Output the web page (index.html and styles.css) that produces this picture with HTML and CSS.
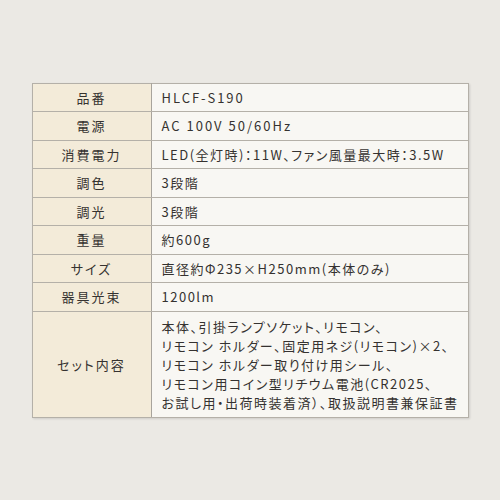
FILE: index.html
```html
<!DOCTYPE html>
<html lang="ja">
<head>
<meta charset="utf-8">
<link rel="stylesheet" href="styles.css">
</head>
<body>
<div class="page">
  <table class="spec">
    <tr><th>品番</th><td class="latin">HLCF-S190</td></tr>
    <tr><th>電源</th><td class="latin">AC 100V 50/60Hz</td></tr>
    <tr><th>消費電力</th><td>LED(全灯時)：11W、ファン風量最大時：3.5W</td></tr>
    <tr><th>調色</th><td>3段階</td></tr>
    <tr><th>調光</th><td>3段階</td></tr>
    <tr><th>重量</th><td>約600g</td></tr>
    <tr><th>サイズ</th><td>直径約Φ235×H250mm(本体のみ)</td></tr>
    <tr><th>器具光束</th><td>1200lm</td></tr>
    <tr class="multi"><th>セット内容</th><td>本体、引掛ランプソケット、リモコン、<br>リモコン ホルダー、固定用ネジ(リモコン)×2、<br>リモコン ホルダー取り付け用シール、<br>リモコン用コイン型リチウム電池(CR2025、<br>お試し用・出荷時装着済）、取扱説明書兼保証書</td></tr>
  </table>
</div>
</body>
</html>
```

FILE: styles.css
```css
html, body {
  margin: 0;
  padding: 0;
  background: #ebe9e4;
}
.page {
  width: 500px;
  height: 500px;
  display: flex;
  align-items: center;
  justify-content: center;
}
.spec {
  width: 437px;
  border-collapse: collapse;
  font-family: "Noto Sans CJK JP", "Noto Sans", sans-serif;
  font-feature-settings: "palt";
  color: #353230;
  font-size: 13px;
  box-shadow: 1px 1px 2px rgba(0,0,0,0.12);
  border: 1.5px solid #a8a49c;
}
.spec th, .spec td {
  border: 1px solid #b4b0a8;
  height: 27.5px;
  padding: 0;
  line-height: 19px;
  vertical-align: middle;
}
.spec th {
  width: 118px;
  background: #f3ebd9;
  font-weight: 400;
  text-align: center;
  letter-spacing: 2px;
  border-right: 1.5px solid #a8a49c;
}
.spec td {
  background: #f8f7f3;
  text-align: left;
  padding-left: 10px;
  letter-spacing: 1.5px;
  white-space: nowrap;
}
.spec td.latin {
  letter-spacing: 2px;
}
.spec tr.multi td {
  padding-top: 5px;
  padding-bottom: 5px;
  height: auto;
}
```
